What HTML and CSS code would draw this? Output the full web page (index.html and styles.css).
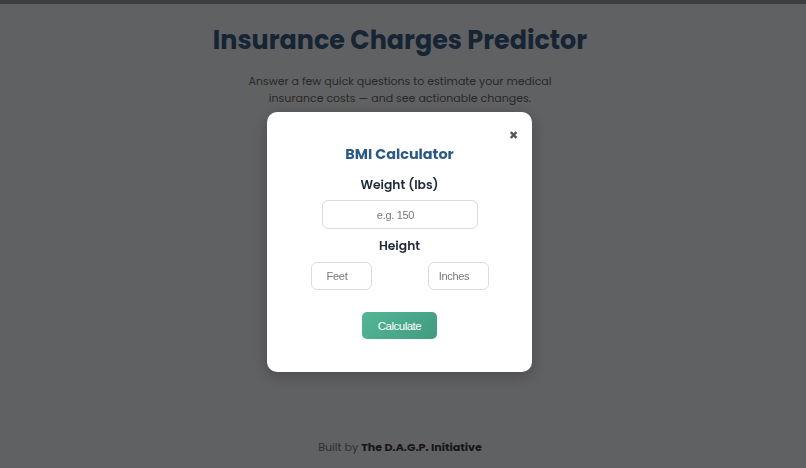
FILE: index.html
```html
<!DOCTYPE html>
<html lang="en">
<head>
  <meta charset="UTF-8">
  <meta name="viewport" content="width=device-width, initial-scale=1">
  <title>Insurance Charges Predictor</title>
  <link rel="stylesheet" href="styles.css">
</head>
<body>

  <div class="top-bar"></div>

  <header class="intro">
    <h1>Insurance Charges Predictor</h1>
    <p>Answer a few quick questions to estimate your medical<br>insurance costs — and see actionable changes.</p>
  </header>

  <footer class="site-footer">
    Built by <strong>The D.A.G.P. Initiative</strong>
  </footer>

  <!-- BMI modal -->
  <div class="modal-overlay" id="bmiModal">
    <div class="modal">
      <button class="close-btn" id="closeBmi" aria-label="Close">&#10006;</button>
      <h2>BMI Calculator</h2>

      <label class="field-label" for="weight">Weight (lbs)</label>
      <input type="text" inputmode="decimal" id="weight" class="input-wide" placeholder="e.g. 150">

      <label class="field-label">Height</label>
      <div class="height-row">
        <input type="text" inputmode="numeric" id="feet" class="input-small" placeholder="Feet">
        <input type="text" inputmode="numeric" id="inches" class="input-small" placeholder="Inches">
      </div>

      <button class="calc-btn" id="calcBtn">Calculate</button>
    </div>
  </div>

  <script>
    const modal = document.getElementById('bmiModal');
    document.getElementById('closeBmi').addEventListener('click', () => {
      modal.style.display = 'none';
    });
  </script>

</body>
</html>
```

FILE: styles.css
```css
body {
  font-family: "Poppins", Inter, "DejaVu Sans", sans-serif;
  margin: 0;
  min-height: 100vh;
  background: #f0f2f5;
  display: flex;
  flex-direction: column;
  align-items: center;
}

.top-bar {
  align-self: stretch;
  height: 4px;
  background: #999b9d;
}

.intro {
  text-align: center;
  margin-right: 6px;
}

.intro h1 {
  margin: 18px 0 0;
  font-size: 25.4px;
  line-height: 36px;
  font-weight: 700;
  color: #385a82;
}

.intro p {
  margin: 15px 0 0;
  font-size: 11px;
  line-height: 17px;
  color: #666;
}

.site-footer {
  margin-top: auto;
  margin-right: 6px;
  padding-bottom: 13px;
  font-size: 11.1px;
  line-height: 16px;
  color: #767676;
}

.site-footer strong {
  color: #3a3a3a;
}

/* Modal */
.modal-overlay {
  position: fixed;
  inset: 0;
  background: rgba(0, 0, 0, 0.6);
  display: flex;
  justify-content: center;
  align-items: flex-start;
  padding: 112px 7px 0 0;
}

.modal {
  position: relative;
  box-sizing: border-box;
  width: 265px;
  height: 260px;
  background: white;
  border-radius: 10px;
  box-shadow: 0 4px 16px rgba(0, 0, 0, 0.25);
  padding: 31px 0 0;
  display: flex;
  flex-direction: column;
  align-items: center;
}

.close-btn {
  position: absolute;
  top: 16px;
  right: 14px;
  border: none;
  background: none;
  padding: 0;
  font-size: 11px;
  line-height: 14px;
  color: #555;
  cursor: pointer;
}

.modal h2 {
  margin: 0;
  font-size: 14.4px;
  line-height: 22px;
  color: #2b5a84;
}

.field-label {
  margin-top: 11px;
  font-size: 12.3px;
  line-height: 18px;
  font-weight: 600;
  color: #1f2937;
}

input {
  font-family: "Liberation Sans", Arial, sans-serif;
  font-size: 11px;
  letter-spacing: -0.3px;
  text-align: center;
  border: 1px solid #dcdcdc;
  border-radius: 6px;
  box-sizing: border-box;
  height: 28px;
  padding: 0 9px 0 1px;
  color: #333;
}

input::placeholder {
  color: #777;
}

.input-wide {
  width: 156px;
  height: 29px;
  margin-top: 6px;
}

.input-wide + .field-label {
  margin-top: 8px;
}

.height-row {
  display: flex;
  gap: 56px;
  margin-top: 7px;
}

.input-small {
  width: 61px;
}

.calc-btn {
  margin-top: 22px;
  width: 75px;
  height: 27px;
  border: none;
  border-radius: 5px;
  background: linear-gradient(135deg, #53b697, #419b80);
  color: white;
  font-family: "Liberation Sans", Arial, sans-serif;
  font-size: 11.5px;
  letter-spacing: -0.5px;
  cursor: pointer;
}
```
